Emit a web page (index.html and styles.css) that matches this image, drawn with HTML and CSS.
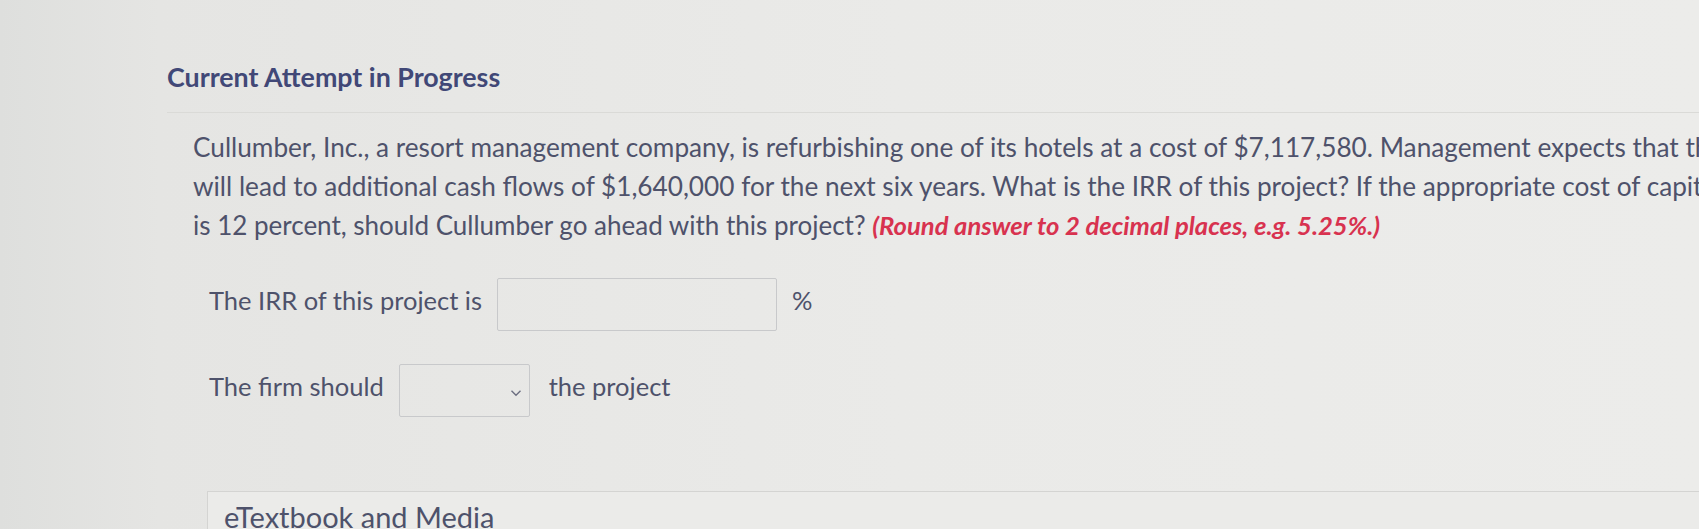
FILE: index.html
```html
<!DOCTYPE html>
<html lang="en">
<head>
    <meta charset="UTF-8">
    <meta name="viewport" content="width=device-width, initial-scale=1.0">
    <title>Current Attempt in Progress</title>
    <link rel="stylesheet" href="styles.css">
</head>
<body>

    <div class="container">
        <h2 class="attempt-title">Current Attempt in Progress</h2>

        <div class="question">
            <p class="prompt">
                Cullumber, Inc., a resort management company, is refurbishing one of its hotels at a cost of $7,117,580. Management expects that this project<br>
                will lead to additional cash flows of $1,640,000 for the next six years. What is the IRR of this project? If the appropriate cost of capital<br>
                <span class="last-line">is 12 percent, should Cullumber go ahead with this project?</span> <span class="hint">(Round answer to 2 decimal places, e.g. 5.25%.)</span>
            </p>

            <div class="answer-row irr-row">
                <label for="irr">The IRR of this project is</label>
                <input type="text" id="irr" class="irr-input">
                <span>%</span>
            </div>

            <div class="answer-row">
                <label>The firm should</label>
                <div class="select-box">
                    <svg width="12" height="8" viewBox="0 0 12 8"><path d="M1.5 1.8 L6 6.2 L10.5 1.8" fill="none" stroke="#6b6e80" stroke-width="1.4"/></svg>
                </div>
                <span>the project</span>
            </div>
        </div>

        <div class="resources">
            <div class="resources-title">eTextbook and Media</div>
        </div>
    </div>

</body>
</html>
```

FILE: styles.css
```css
body {
    margin: 0;
    overflow: hidden;
    height: 529px;
    background: linear-gradient(to right, #dedfdd 0px, #e5e5e3 160px, #eaeae8 900px, #ececea 1699px);
    font-family: Lato, "Open Sans", sans-serif;
    color: #4e526b;
}
.container {
    padding-left: 167px;
    padding-top: 59px;
}
.attempt-title {
    margin: 0;
    font-size: 26.8px;
    font-weight: 700;
    color: #414877;
    line-height: 36px;
    padding-bottom: 17px;
    border-bottom: 1px solid #dadad7;
}
.question {
    padding-left: 26px;
}
.prompt {
    margin: 15px 0 0 0;
    font-size: 26.2px;
    line-height: 39px;
    white-space: nowrap;
}
.last-line {
    font-size: 26px;
}
.hint {
    color: #d8324f;
    font-weight: 700;
    font-style: italic;
    font-size: 25.6px;
}
.answer-row {
    display: flex;
    align-items: center;
    gap: 15px;
    font-size: 25.5px;
    margin-left: 16px;
}
.answer-row label,
.answer-row span {
    padding-bottom: 10px;
}
.irr-row {
    margin-top: 33px;
}
.irr-input {
    width: 280px;
    height: 53px;
    box-sizing: border-box;
    border: 1px solid #c8c9cb;
    border-radius: 2px;
    background: transparent;
}
.answer-row + .answer-row {
    margin-top: 33px;
}
.select-box {
    width: 131px;
    height: 53px;
    box-sizing: border-box;
    border: 1px solid #c8c9cb;
    border-radius: 2px;
    display: flex;
    align-items: center;
    justify-content: flex-end;
    padding: 4px 7px 0 0;
    margin: 0 4px 0 0;
}
.resources {
    margin: 74px 0 0 40px;
    border-top: 1px solid #d4d4d2;
    border-left: 1px solid #d4d4d2;
    background: #ebebe9;
    height: 60px;
}
.resources-title {
    padding: 7px 0 0 16px;
    font-size: 29px;
}
```
